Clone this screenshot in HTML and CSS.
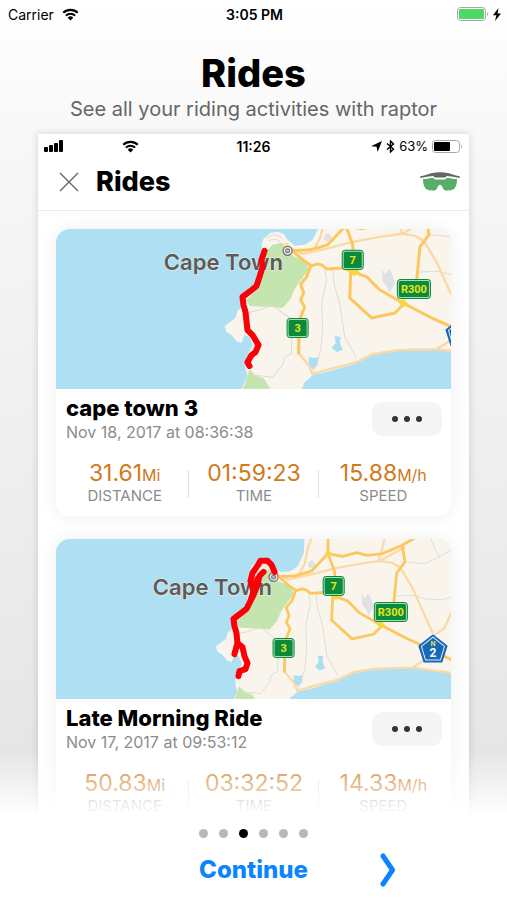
FILE: index.html
```html
<!DOCTYPE html>
<html lang="en">

<head>
    <meta charset="UTF-8">
    <meta name="viewport" content="width=device-width, initial-scale=1.0">
    <title>Rides</title>
    <link rel="stylesheet" href="styles.css">
</head>

<body>
    <!-- Shared shapes -->
    <svg class="defs" width="0" height="0" aria-hidden="true">
        <defs>
            <symbol id="wifi" viewBox="0 0 18 14">
                <path d="M1.2 5.2a11.2 11.2 0 0 1 15.6 0" fill="none" stroke="#000" stroke-width="2.3" />
                <path d="M4 8.2a7.2 7.2 0 0 1 10 0" fill="none" stroke="#000" stroke-width="2.2" />
                <path d="M9 13.4L6 10.4a4.3 4.3 0 0 1 6 0z" />
            </symbol>

            <g id="land">
                <path fill="#f9f5ed" d="M264-30L263-4L260 3L256 11L248 16L238 17L231 11L228 6L222 3L214 4L207 10L205 16L206 23L203 41L200 56L185 67L186 78L181 82L179 89L168 97L170 103L175 106L180 112L185 114L188 106L193 108L196 116L190 128L189 138L191 146L186 158L172 170H243L245 160L248 153L256 146L273 142L300 134L316 126L340 122L380 121L395 122L430 128V-30Z" />
                <path fill="#c5e5b0" d="M216 16L226 14L229 20L236 27L250 33L252 41L242 54L238 60L234 70L226 79L213 78L193 77L190 71L203 58L206 34L211 21Z" />
                <path fill="#c5e5b0" d="M193 140L199 146L207 149L213 158L215 170H180L188 156Z" />
                <path fill="#dfe1e4" d="M325 41L329 45L332 40L335 44L338 54L333 64L330 57L326 53ZM268 6L272 4L276 10L271 13L267 11Z" />
                <path fill="#aadef3" d="M278 107L284 108L283 113L286 121L280 123L275 119L279 114ZM252 128L257 129L262 128L261 136L256 140L252 135Z" />
                <g fill="none" stroke="#dedbd5" stroke-width="1">
                    <path d="M268 41L270 51L265 74L266 101L264 121L257 143" />
                    <path d="M276 41L278 58L283 74L288 108L300 129" />
                    <path d="M190 84L203 81L216 76L226 84L235 90L235 124L228 128L226 136L216 148L197 146" />
                    <path d="M363 43L380 42L395 46L412 47L425 43" />
                    <path d="M372 6L394 8L407 1L425-8" />
                    <path d="M241 92V126M210 9q9-6 15 0M212 12q8-4 12 2" />
                    <path d="M396-30L404-8L410 2" />
                </g>
                <g fill="none" stroke="#fad9a5" stroke-width="2.4" stroke-linejoin="round">
                    <path d="M231 18L246 25L273 19L296 13L323 8L345 5L358 7L367 12L380 34L402 83" />
                    <path d="M352-30L348-10L343 6M345 5L372-10" />
                    <path d="M275-30L267-8L264 8L258 19" />
                    <path d="M242 124L252 136L256 145L273 140L300 133L316 125L340 121L380 120L402 106M380 120L425 126" />
                    <path d="M425 55L414 78L402 86" />
                    <path d="M228 15L236 22" stroke-width="5" />
                </g>
                <g fill="none" stroke="#fcc75d" stroke-width="3" stroke-linejoin="round">
                    <path d="M289-30V-3L271 16L253 21L236 22" />
                    <path d="M289-3L305 0L320-4L331-1L348-3L369-12L390-24" />
                    <path d="M289-3L296 16L297 42" />
                    <path d="M369-12L372 6L363 18L359 60" />
                    <path d="M236 22L246 31L255 37L261 35L265 36L270 40L286 39L296 43L310 48L323 61L346 74L373 88L397 99L425 113" />
                    <path d="M294 43L293 69L315 89L338 84L347 75" />
                    <path d="M254 37L250 48L244 55L247 64L244 71L248 78L243 91L242 125" />
                </g>
                <path fill="#fbd540" d="M290 41L297 38L304 44L297 47ZM341 73L347 70L352 76L346 78ZM286-4L289-7L293-3L289 1Z" />
            </g>

            <symbol id="road-7" viewBox="0 0 24 22">
                <rect x="1" y="1" width="22" height="20" rx="4" fill="#0b8a3c" />
                <rect x="2.500" y="2.500" width="19" height="17" rx="2" fill="none" stroke="#a9dcb9" stroke-width="1" />
                <text class="road-text" x="12" y="15">7</text>
            </symbol>
            <symbol id="road-3" viewBox="0 0 24 22">
                <rect x="1" y="1" width="22" height="20" rx="4" fill="#0b8a3c" />
                <rect x="2.500" y="2.500" width="19" height="17" rx="2" fill="none" stroke="#a9dcb9" stroke-width="1" />
                <text class="road-text" x="12" y="15">3</text>
            </symbol>
            <symbol id="road-r300" viewBox="0 0 36 22">
                <rect x="1" y="1" width="34" height="20" rx="4" fill="#0b8a3c" />
                <rect x="2.500" y="2.500" width="31" height="17" rx="2" fill="none" stroke="#a9dcb9" stroke-width="1" />
                <text class="road-text" x="18" y="15">R300</text>
            </symbol>
            <symbol id="road-n2" viewBox="0 0 30 30">
                <path d="M15 1.500L28.500 12L23.500 27.500H6.500L1.500 12Z" fill="#1768b8" stroke="#1768b8" stroke-width="2" stroke-linejoin="round" />
                <path d="M15 3L26.500 12.300L22.400 26H7.600L3.500 12.300Z" fill="none" stroke="#e4f0fb" stroke-width="1" stroke-linejoin="round" />
                <text class="road-text small" x="15" y="12">N</text>
                <text class="road-text white" x="15" y="23">2</text>
            </symbol>
            <symbol id="city" viewBox="0 0 12 12">
                <circle cx="6" cy="6" r="4.500" fill="#eee" stroke="#77736f" stroke-width="1.300" />
                <circle cx="6" cy="6" r="2" fill="#bbb" stroke="#77736f" stroke-width="1" />
            </symbol>
        </defs>
    </svg>

    <div class="status-bar">
        <div class="status-left">
            <span>Carrier</span>
            <svg class="wifi" role="img" aria-label="Wi-Fi"><use href="#wifi" /></svg>
        </div>
        <span class="clock">3:05 PM</span>
        <div class="status-right">
            <svg width="32" height="14" viewBox="0 0 32 14" role="img" aria-label="Battery full">
                <rect x="0.500" y="0.500" width="28" height="13" rx="3" fill="#fff" stroke="#a8a8a8" />
                <rect x="2" y="2" width="25" height="10" rx="1" fill="#4cd964" />
                <path d="M30 5q2 2 0 4z" fill="#a8a8a8" />
            </svg>
            <svg width="8" height="13" viewBox="0 0 8 13" role="img" aria-label="Charging">
                <path d="M5.500 0L0 7.200H3.400L2 13L8 5.400H4.500Z" />
            </svg>
        </div>
    </div>

    <header class="intro">
        <h1>Rides</h1>
        <p>See all your riding activities with raptor</p>
    </header>

    <main class="stage">
        <div class="preview">
            <div class="preview-status">
                <div class="status-left">
                    <svg width="20" height="12" viewBox="0 0 20 12" role="img" aria-label="Signal">
                        <rect x="0" y="7" width="4" height="5" rx="1" />
                        <rect x="5" y="5" width="4" height="7" rx="1" />
                        <rect x="10" y="3" width="4" height="9" rx="1" />
                        <rect x="15" y="0" width="4" height="12" rx="1" />
                    </svg>
                    <svg class="wifi" role="img" aria-label="Wi-Fi"><use href="#wifi" /></svg>
                </div>
                <span class="clock">11:26</span>
                <div class="status-right">
                    <svg width="11" height="11" viewBox="0 0 11 11" role="img" aria-label="Location">
                        <path d="M11 0L6.600 11L5.600 5.800L0 5.200Z" />
                    </svg>
                    <svg width="9" height="13" viewBox="0 0 9 13" role="img" aria-label="Bluetooth">
                        <path d="M1 3.500L7.500 9L4.500 12V1L7.500 4L1 9.500" fill="none" stroke="#000" stroke-width="1.400" />
                    </svg>
                    <span class="percent">63%</span>
                    <svg width="31" height="13" viewBox="0 0 31 13" role="img" aria-label="Battery 63%">
                        <rect x="0.500" y="0.500" width="27" height="12" rx="3" fill="#fff" stroke="#a8a8a8" />
                        <rect x="2" y="2" width="16" height="9" rx="1" />
                        <path d="M29 4q2 2.500 0 5z" fill="#a8a8a8" />
                    </svg>
                </div>
            </div>

            <div class="preview-header">
                <button class="close" type="button" aria-label="Close">
                    <svg width="20" height="20" viewBox="0 0 20 20">
                        <path d="M1 1L19 19M19 1L1 19" stroke="#666" stroke-width="1.400" />
                    </svg>
                </button>
                <h2>Rides</h2>
                <svg width="40" height="20" viewBox="0 0 40 20" role="img" aria-label="Raptor glasses">
                    <path d="M3 7Q20 4 37 7Q37 14 34 17Q29 19.500 24 18L21.500 13.500Q20 12 18.500 13.500L16 18Q11 19.500 6 17Q3 14 3 7Z" fill="#58ae67" />
                    <path d="M0 4Q6 3 11 1.500Q20 -0.500 29 1.500Q34 3 40 4L39 7.500L27 5.500L25 7.500H15L13 5.500L1 7.500Z" fill="#fff" />
                    <path d="M0 4.500Q6 3 11 1.200Q20 -0.600 29 1.200Q34 3 40 4.500L39.500 6Q33 4.500 27 4L25 5.500H15L13 4Q7 4.500 0.500 6Z" fill="#666" />
                </svg>
            </div>

            <div class="rides">
                <article class="ride">
                    <svg class="map" viewBox="0 0 394 160" preserveAspectRatio="xMidYMid slice" role="img" aria-label="Map of the ride">
                        <use href="#land" />
                        <text class="place" x="167" y="41">Cape Town</text>
                        <use href="#city" x="225" y="16" width="12" height="12" />
                        <path class="route" d="M208 22L205 31L206 38L203 48L200 57L194 62L186 68L187 76L189 83L191 101L196 106L202 116L199 123L195 126L191 133L193 137" />
                        <use href="#road-7" x="284" y="20" width="24" height="22" />
                        <use href="#road-3" x="229" y="88" width="24" height="22" />
                        <use href="#road-r300" x="339" y="49" width="36" height="22" />
                        <use href="#road-n2" x="388" y="89" width="30" height="30" />
                    </svg>
                    <div class="ride-body">
                        <div class="ride-head">
                            <div>
                                <h3>cape town 3</h3>
                                <p class="date">Nov 18, 2017 at 08:36:38</p>
                            </div>
                            <button class="more" type="button" aria-label="More"><i></i><i></i><i></i></button>
                        </div>
                        <dl class="stats">
                            <div>
                                <dt>DISTANCE</dt>
                                <dd>31.61<small>Mi</small></dd>
                            </div>
                            <div>
                                <dt>TIME</dt>
                                <dd>01:59:23</dd>
                            </div>
                            <div>
                                <dt>SPEED</dt>
                                <dd>15.88<small>M/h</small></dd>
                            </div>
                        </dl>
                    </div>
                </article>

                <article class="ride">
                    <svg class="map" viewBox="0 0 394 160" preserveAspectRatio="xMidYMid slice" role="img" aria-label="Map of the ride">
                        <use href="#land" transform="translate(4 17.500) scale(0.925)" />
                        <text class="place" x="156" y="56">Cape Town</text>
                        <use href="#city" x="211" y="32" width="12" height="12" />
                        <path class="route" d="M218 33L215 26L211 22L204 22L201 27L196 34L194 42L197 52L194 62L190 70L177 80L178 87L180 94L181 104L178 115M181 104L186 108L188 117L191 124L189 130L183 132L182 137M207 33L203 37L201 46L197 56L193 64M197 52L201 40" />
                        <use href="#road-7" x="265" y="36" width="24" height="22" />
                        <use href="#road-3" x="215" y="98" width="24" height="22" />
                        <use href="#road-r300" x="316" y="62" width="36" height="22" />
                        <use href="#road-n2" x="361" y="95" width="30" height="30" />
                    </svg>
                    <div class="ride-body">
                        <div class="ride-head">
                            <div>
                                <h3>Late Morning Ride</h3>
                                <p class="date">Nov 17, 2017 at 09:53:12</p>
                            </div>
                            <button class="more" type="button" aria-label="More"><i></i><i></i><i></i></button>
                        </div>
                        <dl class="stats">
                            <div>
                                <dt>DISTANCE</dt>
                                <dd>50.83<small>Mi</small></dd>
                            </div>
                            <div>
                                <dt>TIME</dt>
                                <dd>03:32:52</dd>
                            </div>
                            <div>
                                <dt>SPEED</dt>
                                <dd>14.33<small>M/h</small></dd>
                            </div>
                        </dl>
                    </div>
                </article>
            </div>
        </div>
    </main>

    <footer class="controls">
        <nav class="dots" aria-label="Pages">
            <button type="button" aria-label="Page 1"></button>
            <button type="button" aria-label="Page 2"></button>
            <button type="button" aria-label="Page 3" class="active"></button>
            <button type="button" aria-label="Page 4"></button>
            <button type="button" aria-label="Page 5"></button>
            <button type="button" aria-label="Page 6"></button>
        </nav>
        <div class="actions">
            <button class="continue" type="button">Continue</button>
            <button class="next" type="button" aria-label="Next">
                <svg width="16" height="34" viewBox="0 0 16 34">
                    <path d="M3 3L12.500 17L3 31" fill="none" stroke="#0a84ff" stroke-width="5" stroke-linecap="round" stroke-linejoin="round" />
                </svg>
            </button>
        </div>
    </footer>
</body>

</html>
```

FILE: styles.css
```css
* {
    box-sizing: border-box;
}

body {
    margin: 0;
    height: 100vh;
    display: flex;
    flex-direction: column;
    font-family: "Inter", "Liberation Sans", sans-serif;
    color: #000;
    background: linear-gradient(#fff 0, #f8f8f8 130px, #e6e6e6 750px);
}

h1,
h2,
h3,
p,
dl,
dd {
    margin: 0;
}

button {
    padding: 0;
    border: none;
    background: none;
    font-family: inherit;
    cursor: pointer;
}

svg {
    display: block;
}

.defs {
    position: absolute;
}

/* Status bars */
.status-bar,
.preview-status {
    display: grid;
    grid-template-columns: 1fr auto 1fr;
    align-items: center;
    font-size: 14px;
}

.status-bar {
    height: 28px;
    padding: 0 6px 0 8px;
}

.status-left,
.status-right {
    display: flex;
    align-items: center;
    gap: 8px;
}

.status-right {
    justify-content: flex-end;
    gap: 4px;
}

.wifi {
    width: 17px;
    height: 13px;
}

.clock {
    font-weight: 600;
}

/* Title */
.intro {
    padding-top: 21px;
    text-align: center;
}

.intro h1 {
    font-size: 38px;
    line-height: 48px;
    font-weight: 800;
}

.intro p {
    font-size: 20px;
    line-height: 24px;
    color: #666;
}

/* App preview */
.stage {
    position: relative;
    flex: 1;
    min-height: 0;
    padding: 13px 38px 0;
    overflow: hidden;
}

.stage::after {
    content: "";
    position: absolute;
    left: 0;
    right: 0;
    bottom: 0;
    height: 64px;
    background: linear-gradient(rgba(255, 255, 255, 0), #fff);
    pointer-events: none;
}

.preview {
    background: #fff;
    box-shadow: 0 0 8px rgba(0, 0, 0, 0.15);
}

.preview-status {
    height: 24px;
    padding: 0 6px;
}

.preview-status .status-left {
    gap: 58px;
}

.percent {
    font-size: 13px;
}

.preview-header {
    display: flex;
    align-items: center;
    gap: 17px;
    height: 53px;
    padding: 0 9px 4px 21px;
    border-bottom: 1px solid #ececec;
}

.preview-header h2 {
    flex: 1;
    font-size: 27px;
    line-height: 32px;
    font-weight: 800;
}

.rides {
    display: flex;
    flex-direction: column;
    gap: 23px;
    padding: 18px;
}

.ride {
    border-radius: 14px;
    background: #fff;
    box-shadow: 0 0 18px rgba(0, 0, 0, 0.07);
    overflow: hidden;
    flex: none;
}

.map {
    width: 100%;
    height: 160px;
    background: #aedff3;
}

.place {
    font-size: 22px;
    font-weight: 600;
    fill: #5f5a55;
    stroke: #e8f1f3;
    stroke-width: 1px;
    paint-order: stroke;
    text-anchor: middle;
}

.route {
    fill: none;
    stroke: #fb0007;
    stroke-width: 6px;
    stroke-linecap: round;
    stroke-linejoin: round;
}

.road-text {
    font-family: "Liberation Sans Narrow", "Roboto", sans-serif;
    font-size: 11px;
    font-weight: 700;
    fill: #e8e51c;
    text-anchor: middle;
}

.road-text.small {
    font-size: 7px;
}

.road-text.white {
    fill: #fff;
    font-size: 12px;
}

.ride-body {
    padding: 6px 9px 12px 10px;
}

.ride-head {
    display: flex;
    justify-content: space-between;
    align-items: center;
}

.ride-head h3 {
    font-size: 22px;
    line-height: 26px;
    font-weight: 800;
}

.date {
    font-size: 16px;
    line-height: 22px;
    color: #8c8c8c;
}

.more {
    display: flex;
    justify-content: center;
    align-items: center;
    gap: 6px;
    width: 70px;
    height: 34px;
    border-radius: 10px;
    background: #f5f5f5;
}

.more i {
    width: 6px;
    height: 6px;
    border-radius: 50%;
    background: #333;
}

.stats {
    display: grid;
    grid-template-columns: repeat(3, 1fr);
    margin: 16px -6px 0;
    text-align: center;
}

.stats div {
    display: flex;
    flex-direction: column-reverse;
    justify-content: flex-end;
    background: linear-gradient(#dedede, #dedede) right 11px / 1px 28px no-repeat;
}

.stats div:last-child {
    background: none;
}

.stats dt {
    font-size: 15px;
    line-height: 17px;
    color: #8c8c8c;
}

.stats dd {
    font-size: 23px;
    line-height: 28px;
    color: #cf7a1c;
}

.stats small {
    font-size: 16px;
    line-height: 16px;
}

/* Bottom controls */
.controls {
    height: 84px;
    background: #fff;
}

.dots {
    display: flex;
    justify-content: center;
    gap: 11px;
    padding-top: 13px;
}

.dots button {
    width: 9px;
    height: 9px;
    border-radius: 50%;
    background: #b8b8b8;
}

.dots .active {
    background: #000;
}

.actions {
    display: grid;
    grid-template-columns: 1fr auto 1fr;
    align-items: center;
    padding-top: 15px;
}

.continue {
    grid-column: 2;
    font-size: 24px;
    line-height: 30px;
    font-weight: 800;
    color: #0a84ff;
}

.next {
    justify-self: start;
    margin-left: 72px;
}
```
